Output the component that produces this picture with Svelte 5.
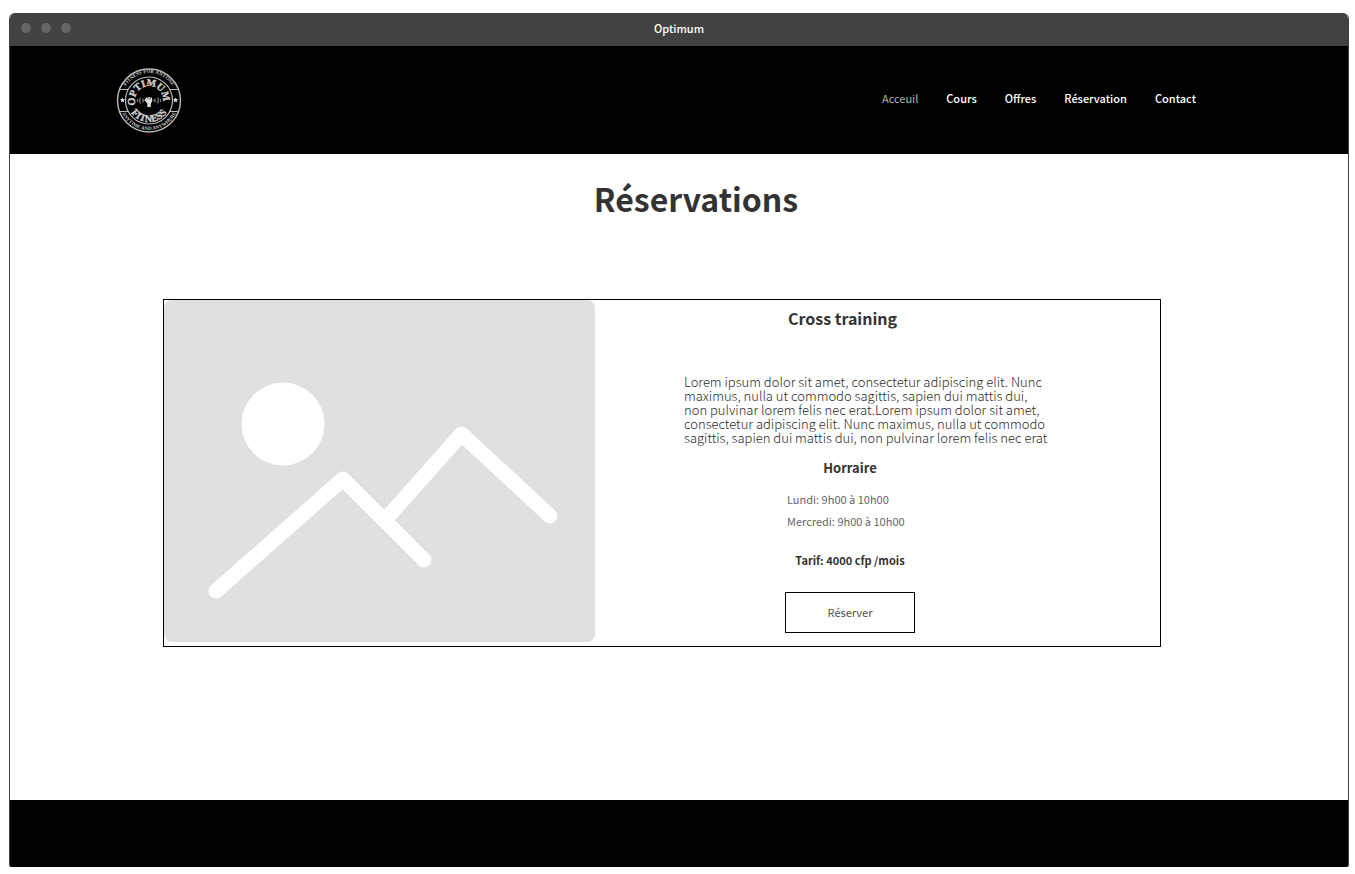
<script>
  const links = ['Acceuil', 'Cours', 'Offres', 'Réservation', 'Contact'];
  const current = 'Acceuil';
  const slots = ['Lundi: 9h00 à 10h00', 'Mercredi: 9h00 à 10h00'];
</script>

<div class="window">
  <div class="titlebar">
    <span class="dots"><i></i><i></i><i></i></span>
    <span class="name">Optimum</span>
  </div>

  <header>
    <svg class="logo" viewBox="0 0 66 66" role="img" aria-label="Optimum Fitness">
      <defs>
        <path id="ring-top" d="M6 33a27 27 0 0 1 54 0" />
        <path id="ring-bottom" d="M3 33a30 30 0 0 0 60 0" />
        <path id="name-top" d="M19 33v4v-4a14 14 0 0 1 28 0v4" />
        <path id="name-bottom" d="M11 33a22 22 0 0 0 44 0" />
      </defs>
      <g fill="none" stroke="#bbb">
        <circle cx="33" cy="33.500" r="31.500" stroke-width="1.400" />
        <circle cx="33" cy="33.500" r="23.500" stroke-width="1.200" />
        <path d="M3.500 22.500h8.500M3.500 44.500h8.500M54 22.500h8.500M54 44.500h8.500" stroke-width="1" />
      </g>
      <g fill="#ccc" text-anchor="middle">
        <text class="small"><textPath href="#ring-top" startOffset="50%">FITNESS FOR ANYONE</textPath></text>
        <text class="small"><textPath href="#ring-bottom" startOffset="50%">ANYTIME AND ANYWHERE</textPath></text>
        <text class="big"><textPath href="#name-top" startOffset="50%">OPTIMUM</textPath></text>
        <text class="big"><textPath href="#name-bottom" startOffset="50%">FITNESS</textPath></text>
      </g>
      <g fill="#ddd">
        <path d="m6.500 30.500.8 1.600 1.700.2-1.200 1.200.3 1.700-1.600-.8-1.600.8.3-1.700L4 32.300l1.700-.2zM59.500 30.500l.8 1.600 1.700.2-1.200 1.200.3 1.700-1.600-.8-1.600.8.3-1.700-1.200-1.200 1.700-.2z" />
        <path d="M29.500 31.500l.5-1h1l.3 2.500.4-3h1l.3 3 .4-3h1l.3 3 .5-2.500h.8l.3 3.500-1.500 2.500v3.500h-3.500v-3.500l-2.500-3z" />
      </g>
      <path d="M24.500 30.500q-2 3 0 6M27 31.500v4M21.500 32v3M41.500 30.500q2 3 0 6M39 31.500v4M44.500 32v3M27 33.500h2M37 33.500h2" fill="none" stroke="#777" stroke-width="1.200" />
    </svg>
    <nav>
      {#each links as link}
        <a href="#top" class:current={link === current}>{link}</a>
      {/each}
    </nav>
  </header>

  <main>
    <h1>Réservations</h1>
    <article>
      <svg class="photo" viewBox="0 0 431 342" aria-hidden="true">
        <rect width="431" height="342" rx="8" fill="#e0e0e0" />
        <circle cx="119" cy="124" r="41.500" fill="#fff" />
        <path d="M52 291 179 179 260 260M222 219 297.500 134 386 216" fill="none" stroke="#fff" stroke-width="15" stroke-linecap="round" stroke-linejoin="round" />
      </svg>
      <div class="info">
        <h2>Cross training</h2>
        <p class="text">Lorem ipsum dolor sit amet, consectetur adipiscing elit. Nunc maximus, nulla ut commodo sagittis, sapien dui mattis dui, non pulvinar lorem felis nec erat.Lorem ipsum dolor sit amet, consectetur adipiscing elit. Nunc maximus, nulla ut commodo sagittis, sapien dui mattis dui, non pulvinar lorem felis nec erat</p>
        <div class="booking">
          <h3>Horraire</h3>
          <ul>
            {#each slots as slot}
              <li>{slot}</li>
            {/each}
          </ul>
          <p class="price">Tarif: 4000 cfp /mois</p>
          <button type="button">Réserver</button>
        </div>
      </div>
    </article>
  </main>

  <footer></footer>
</div>

<style>
  :global(body) {
    margin: 0;
    background: #fff;
  }
  .window {
    box-sizing: border-box;
    min-height: calc(100vh - 20px);
    margin: 13px 6px 7px 9px;
    display: flex;
    flex-direction: column;
    border: solid #424242;
    border-width: 0 1px;
    border-radius: 6px 6px 2px 2px;
    overflow: hidden;
    color: #333;
    font-family: "Noto Sans CJK SC", "Noto Sans", sans-serif;
  }
  .titlebar {
    box-sizing: border-box;
    display: grid;
    grid-template-columns: 1fr auto 1fr;
    align-items: center;
    height: 33px;
    padding: 0 11px 3px;
    background: #424242;
  }
  .dots {
    display: flex;
    gap: 10px;
  }
  .dots i {
    width: 10px;
    height: 10px;
    border-radius: 50%;
    background: #666;
  }
  .name {
    color: #fff;
    font-size: 11px;
    font-weight: 500;
    line-height: 16px;
  }
  header {
    display: flex;
    align-items: center;
    justify-content: space-between;
    height: 108px;
    padding: 0 152px 0 106px;
    background: #000;
  }
  .logo {
    width: 66px;
    height: 66px;
  }
  .logo text {
    font-family: "Liberation Serif", serif;
    font-weight: 700;
  }
  .small {
    font-size: 5px;
  }
  .big {
    font-size: 10px;
    stroke: #ccc;
    stroke-width: 0.4px;
  }
  nav {
    display: flex;
    gap: 28px;
    padding-bottom: 4px;
  }
  nav a {
    color: #fff;
    font-size: 11px;
    font-weight: 500;
    line-height: 16px;
    text-decoration: none;
  }
  nav a.current {
    color: #b3b3b3;
    font-weight: 400;
  }
  main {
    flex: 1;
    padding: 20px 187px 0 153px;
    background: #fff;
  }
  h1, h2, h3, p, ul {
    margin: 0;
    padding: 0;
  }
  h1 {
    padding-left: 68px;
    margin-bottom: 77px;
    font-size: 32px;
    line-height: 48px;
    text-align: center;
  }
  article {
    display: grid;
    grid-template-columns: 431fr 565fr;
    border: 1px solid #000;
  }
  .photo {
    display: block;
    width: 100%;
  }
  .info {
    display: flex;
    flex-direction: column;
    align-items: flex-start;
    padding: 6px 88px 13px 89px;
  }
  h2 {
    margin: 0 0 45px 104px;
    font-size: 16px;
    line-height: 24px;
  }
  .text {
    width: 368px;
    max-width: 100%;
    margin-bottom: 15px;
    color: #2b2b2b;
    font-size: 13px;
    font-weight: 300;
    line-height: 14px;
  }
  .booking {
    display: flex;
    flex-direction: column;
    align-items: center;
    margin-left: 101px;
  }
  h3 {
    margin-bottom: 12px;
    font-size: 13px;
    line-height: 16px;
  }
  ul {
    align-self: flex-start;
    padding-left: 2px;
    margin-bottom: 20px;
    list-style: none;
    color: #666;
    font-size: 11px;
    line-height: 22px;
  }
  .price {
    margin-bottom: 24px;
    font-size: 11px;
    font-weight: 700;
    line-height: 16px;
  }
  button {
    width: 130px;
    height: 41px;
    padding: 0 0 2px;
    border: 1px solid #000;
    background: #fff;
    color: #4d4d4d;
    font: inherit;
    font-size: 11px;
  }
  footer {
    height: 67px;
    background: #000;
  }
</style>
